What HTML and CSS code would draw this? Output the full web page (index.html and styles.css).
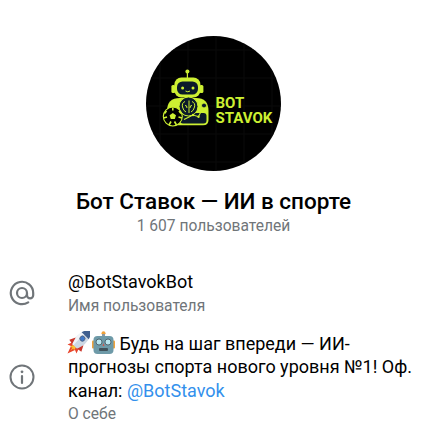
FILE: index.html
```html
<!DOCTYPE html>
<html lang="ru">
<head>
<meta charset="UTF-8">
<title>Бот Ставок</title>
<link rel="stylesheet" href="styles.css">
</head>
<body>
    <div class="container">
        <div class="profile">
            <svg class="avatar" viewBox="146 36 135 135">
                <defs>
                    <clipPath id="disc"><circle cx="213.5" cy="103.5" r="67.5"/></clipPath>
                </defs>
                <g clip-path="url(#disc)">
                    <rect x="146" y="36" width="135" height="135" fill="#000"/>
                    <path d="M160 36V171M188 36V171M216 36V171M244 36V171M272 36V171M146 50H281M146 78H281M146 106H281M146 134H281M146 162H281" stroke="#0a0a0a" stroke-width="1" fill="none"/>
                </g>
                <!-- robot -->
                <circle cx="187.4" cy="71.6" r="2" fill="#cdf032"/>
                <path d="M187.4 72V78" stroke="#cdf032" stroke-width="1.2"/>
                <rect x="171.4" y="85" width="4" height="8" rx="1.5" fill="#cdf032"/>
                <rect x="199.4" y="85" width="4" height="8" rx="1.5" fill="#cdf032"/>
                <rect x="174.4" y="77.5" width="26" height="20" rx="7" fill="#cdf032"/>
                <rect x="177" y="81.5" width="21" height="13" rx="5.5" fill="#0b1a2a"/>
                <circle cx="182.6" cy="88" r="1.5" fill="#cdf032"/>
                <circle cx="193" cy="88" r="1.5" fill="#cdf032"/>
                <path d="M185.5 91Q187.8 92.6 190 91" stroke="#cdf032" stroke-width="1" fill="none"/>
                <path d="M167 111Q167 98 180 98H196Q208.500 98 208.500 111V120Q208.500 125.300 203 125.300H170Q167 125.300 167 120Z" fill="#cdf032"/>
                <rect x="180" y="113" width="26.500" height="10.500" rx="3" fill="#0b1a2a"/>
                <circle cx="188.500" cy="106.500" r="9.500" fill="#0b1a2a" stroke="#cdf032" stroke-width="1"/>
                <path d="M185 101.500Q181.500 103 182.500 107T186 112M189 100.500V113M192 101.500Q195.500 103 194.500 107T191 112M185 105.500Q187 105 187 108M192 105.500Q190 105 190 108" stroke="#cdf032" stroke-width="1" fill="none"/>
                <path d="M184 119.500L193 115L198.500 116.700L203.800 106" stroke="#cdf032" stroke-width="1.100" fill="none"/>
                <circle cx="193" cy="115" r="1.200" fill="#cdf032"/>
                <circle cx="198.500" cy="116.700" r="1.200" fill="#cdf032"/>
                <circle cx="204" cy="105.500" r="2.500" fill="#0b1a2a" stroke="#cdf032" stroke-width="1"/>
                <circle cx="172.800" cy="116.500" r="9.500" fill="#000" stroke="#cdf032" stroke-width="1.100"/>
                <path d="M172.800 113L176 115.300L174.800 119H170.800L169.600 115.300Z" fill="#cdf032"/>
                <path d="M172.800 107.500V110.500M179 111L181 113.500M166.500 111L164.500 113.500M169 125L171 121.500M176.500 125L174.500 121.500M163.500 118L167 117M182 118L178.500 117" stroke="#cdf032" stroke-width="1.600" fill="none"/>
                <text class="logo-text" x="215.500" y="108.300">BOT</text>
                <text class="logo-text" x="215.500" y="123.300">STAVOK</text>
            </svg>
            <h1>Бот Ставок — ИИ в спорте</h1>
            <div class="members">1 607 пользователей</div>
        </div>

        <div class="info-row">
            <svg class="info-icon" viewBox="0 0 26 26">
                <path d="M18 13a5 5 0 1 1-10 0a5 5 0 1 1 10 0v2.200a3.100 3.100 0 0 0 6.200 0V13a11.200 11.200 0 1 0-5 9.300" stroke="#707579" stroke-width="2.200" fill="none" stroke-linecap="round"/>
            </svg>
            <div>
                <div class="info-text">@BotStavokBot</div>
                <div class="info-label">Имя пользователя</div>
            </div>
        </div>

        <div class="info-row about">
            <svg class="info-icon" viewBox="0 0 26 26">
                <circle cx="13" cy="13" r="11.500" stroke="#707579" stroke-width="2" fill="none"/>
                <circle cx="13" cy="7.800" r="1.400" fill="#707579"/>
                <path d="M13 12V19" stroke="#707579" stroke-width="2.200" stroke-linecap="round"/>
            </svg>
            <div>
                <div class="info-text">
                    <svg class="emoji rocket" viewBox="0 0 23 23">
                        <path d="M6 11L.5 13.500L4 15L.5 22.500L8 19L9.500 22.500L12 17Z" fill="#e8452c"/>
                        <path d="M6 14L3 16L5.500 16.500L3.500 19.500L6.500 17.500L7 19.500L9 16Z" fill="#f9c22e"/>
                        <g transform="rotate(45 14 9)">
                            <path d="M14 -5Q20 1 19.500 9Q19.500 14 17.500 18H10.500Q8.500 14 8.500 9Q8 1 14 -5Z" fill="#cdd8e4"/>
                            <path d="M14 -5Q8 1 8.500 9Q8.500 14 10.500 18H12.500Q11 9 14 -5Z" fill="#f1f4f8"/>
                            <path d="M14 -5Q18 -1 19 3H9Q10 -1 14 -5Z" fill="#3f5f8f"/>
                            <circle cx="14" cy="7" r="2.600" fill="#3f78c9" stroke="#4f5e75" stroke-width=".8"/>
                            <path d="M8.500 11L5.500 17L10.500 18ZM19.500 11L22.500 17L17.500 18Z" fill="#c9372c"/>
                        </g>
                    </svg><svg class="emoji robot" viewBox="0 0 23 23">
                        <circle cx="11.500" cy="2.200" r="2" fill="#f0a23a"/>
                        <rect x="10" y="3" width="3" height="3" fill="#8a9aa3"/>
                        <rect x="0" y="9.500" width="3" height="8" rx="1" fill="#f0a23a"/>
                        <rect x="20" y="9.500" width="3" height="8" rx="1" fill="#f0a23a"/>
                        <rect x="1.500" y="5" width="20" height="18" rx="4" fill="#6e9aa8"/>
                        <circle cx="7" cy="11" r="3" fill="#b9e6ef" stroke="#41525b" stroke-width=".8"/>
                        <circle cx="16" cy="11" r="3" fill="#b9e6ef" stroke="#41525b" stroke-width=".8"/>
                        <rect x="7" y="17" width="9" height="3" rx="1" fill="#41525b"/>
                        <path d="M11.500 12L10.500 15H12.500Z" fill="#d0574a"/>
                    </svg>
                    Будь на шаг впереди — ИИ-прогнозы спорта нового уровня №1! Оф. канал: <a href="#">@BotStavok</a>
                </div>
                <div class="info-label">О себе</div>
            </div>
        </div>
    </div>
</body>
</html>
```

FILE: styles.css
```css
body {
    font-family: Roboto, sans-serif;
    background-color: #fff;
    color: #000;
    margin: 0;
    overflow: hidden;
}
.container {
    width: 427px;
    height: 437px;
    padding-top: 36px;
    box-sizing: border-box;
}
.profile {
    display: flex;
    flex-direction: column;
    align-items: center;
}
.avatar {
    width: 135px;
    height: 135px;
    display: block;
}
.logo-text {
    font-size: 15px;
    font-weight: 700;
    fill: #cdf032;
}
h1 {
    font-size: 22.5px;
    font-weight: 500;
    line-height: 28px;
    margin: 16px 0 0;
}
.members {
    font-size: 15.6px;
    line-height: 20px;
    color: #707579;
    margin-top: 1px;
}
.info-row {
    display: flex;
    align-items: center;
    gap: 33px;
    padding: 0 9px;
    margin-top: 34px;
}
.about {
    margin-top: 15px;
}
.info-icon {
    width: 26px;
    height: 26px;
    flex: none;
}
.info-text {
    font-size: 18px;
    line-height: 23.5px;
}
.info-label {
    font-size: 15.6px;
    line-height: 20px;
    color: #707579;
    margin-top: 2px;
}
.emoji {
    width: 23px;
    height: 23px;
    vertical-align: -4px;
}
.rocket {
    margin-left: -1px;
}
.robot {
    margin-left: 2px;
}
a {
    color: #3390ec;
    text-decoration: none;
}
```
